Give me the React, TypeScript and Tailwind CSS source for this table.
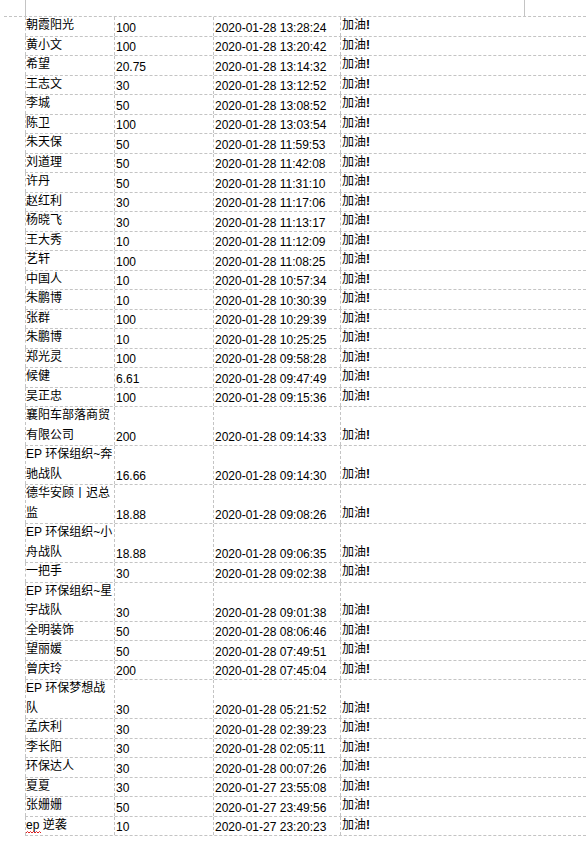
const rows: { name: string[]; amount: string; time: string; squiggle?: boolean }[] = [
  { name: ['朝霞阳光'], amount: '100', time: '2020-01-28 13:28:24' },
  { name: ['黄小文'], amount: '100', time: '2020-01-28 13:20:42' },
  { name: ['希望'], amount: '20.75', time: '2020-01-28 13:14:32' },
  { name: ['王志文'], amount: '30', time: '2020-01-28 13:12:52' },
  { name: ['李城'], amount: '50', time: '2020-01-28 13:08:52' },
  { name: ['陈卫'], amount: '100', time: '2020-01-28 13:03:54' },
  { name: ['朱天保'], amount: '50', time: '2020-01-28 11:59:53' },
  { name: ['刘道理'], amount: '50', time: '2020-01-28 11:42:08' },
  { name: ['许丹'], amount: '50', time: '2020-01-28 11:31:10' },
  { name: ['赵红利'], amount: '30', time: '2020-01-28 11:17:06' },
  { name: ['杨晓飞'], amount: '30', time: '2020-01-28 11:13:17' },
  { name: ['王大秀'], amount: '10', time: '2020-01-28 11:12:09' },
  { name: ['艺轩'], amount: '100', time: '2020-01-28 11:08:25' },
  { name: ['中国人'], amount: '10', time: '2020-01-28 10:57:34' },
  { name: ['朱鹏博'], amount: '10', time: '2020-01-28 10:30:39' },
  { name: ['张群'], amount: '100', time: '2020-01-28 10:29:39' },
  { name: ['朱鹏博'], amount: '10', time: '2020-01-28 10:25:25' },
  { name: ['郑光灵'], amount: '100', time: '2020-01-28 09:58:28' },
  { name: ['候健'], amount: '6.61', time: '2020-01-28 09:47:49' },
  { name: ['吴正忠'], amount: '100', time: '2020-01-28 09:15:36' },
  { name: ['襄阳车部落商贸', '有限公司'], amount: '200', time: '2020-01-28 09:14:33' },
  { name: ['EP 环保组织~奔', '驰战队'], amount: '16.66', time: '2020-01-28 09:14:30' },
  { name: ['德华安顾丨迟总', '监'], amount: '18.88', time: '2020-01-28 09:08:26' },
  { name: ['EP 环保组织~小', '舟战队'], amount: '18.88', time: '2020-01-28 09:06:35' },
  { name: ['一把手'], amount: '30', time: '2020-01-28 09:02:38' },
  { name: ['EP 环保组织~星', '宇战队'], amount: '30', time: '2020-01-28 09:01:38' },
  { name: ['全明装饰'], amount: '50', time: '2020-01-28 08:06:46' },
  { name: ['望丽媛'], amount: '50', time: '2020-01-28 07:49:51' },
  { name: ['曾庆玲'], amount: '200', time: '2020-01-28 07:45:04' },
  { name: ['EP 环保梦想战', '队'], amount: '30', time: '2020-01-28 05:21:52' },
  { name: ['孟庆利'], amount: '30', time: '2020-01-28 02:39:23' },
  { name: ['李长阳'], amount: '30', time: '2020-01-28 02:05:11' },
  { name: ['环保达人'], amount: '30', time: '2020-01-28 00:07:26' },
  { name: ['夏夏'], amount: '30', time: '2020-01-27 23:55:08' },
  { name: ['张姗姗'], amount: '50', time: '2020-01-27 23:49:56' },
  { name: ['ep 逆袭'], amount: '10', time: '2020-01-27 23:20:23', squiggle: true },
];

const cjk = { fontFamily: '"Liberation Sans", "Noto Sans CJK SC", sans-serif' };

// red spell-check squiggle under "ep"
function Squiggle() {
  return (
    <svg className="absolute left-0 bottom-[1px]" width="15" height="3" viewBox="0 0 15 3">
      <path d="M0 2 L1.5 0.5 L3 2 L4.5 0.5 L6 2 L7.5 0.5 L9 2 L10.5 0.5 L12 2 L13.5 0.5 L15 2" fill="none" stroke="#e02020" strokeWidth="1" />
    </svg>
  );
}

export default function App() {
  return (
    <div className="w-[586px] h-[851px] bg-white text-black overflow-hidden" style={cjk}>
      {/* header strip */}
      <div className="relative h-[16px]">
        <div className="absolute left-[25px] top-0 h-[16px] w-px bg-[#c4c4c4]" />
        <div className="absolute left-[524px] top-0 h-[16px] w-px bg-[#c4c4c4]" />
      </div>
      <div className="ml-[4px] border-t border-dashed border-[#c4c4c4]">
        <div className="ml-[21px]">
          {rows.map((r, i) => (
            <div
              key={i}
              className={`flex border-b border-dashed border-[#c4c4c4] ${r.name.length > 1 ? 'h-[39px]' : 'h-[19.5px]'}`}
            >
              <div className="w-[89px] shrink-0 border-l border-dashed border-[#c4c4c4] flex flex-col justify-end text-[12px] leading-[19.5px] whitespace-nowrap">
                {r.name.map((line, j) =>
                  r.squiggle ? (
                    <span key={j}>
                      <span className="relative inline-block">
                        ep
                        <Squiggle />
                      </span>{' '}
                      逆袭
                    </span>
                  ) : (
                    <span key={j}>{line}</span>
                  ),
                )}
              </div>
              <div className="w-[99px] shrink-0 border-l border-dashed border-[#c4c4c4] pl-[1px] flex items-end text-[12px] leading-[16px]">
                {r.amount}
              </div>
              <div className="w-[127px] shrink-0 border-l border-dashed border-[#c4c4c4] pl-px flex items-end text-[12px] leading-[16px] whitespace-nowrap">
                {r.time}
              </div>
              <div className="flex-1 border-l border-dashed border-[#c4c4c4] pl-px flex items-end text-[12px] leading-[19.5px] whitespace-nowrap">
                加油<span className="font-bold">!</span>
              </div>
            </div>
          ))}
        </div>
      </div>
    </div>
  );
}
